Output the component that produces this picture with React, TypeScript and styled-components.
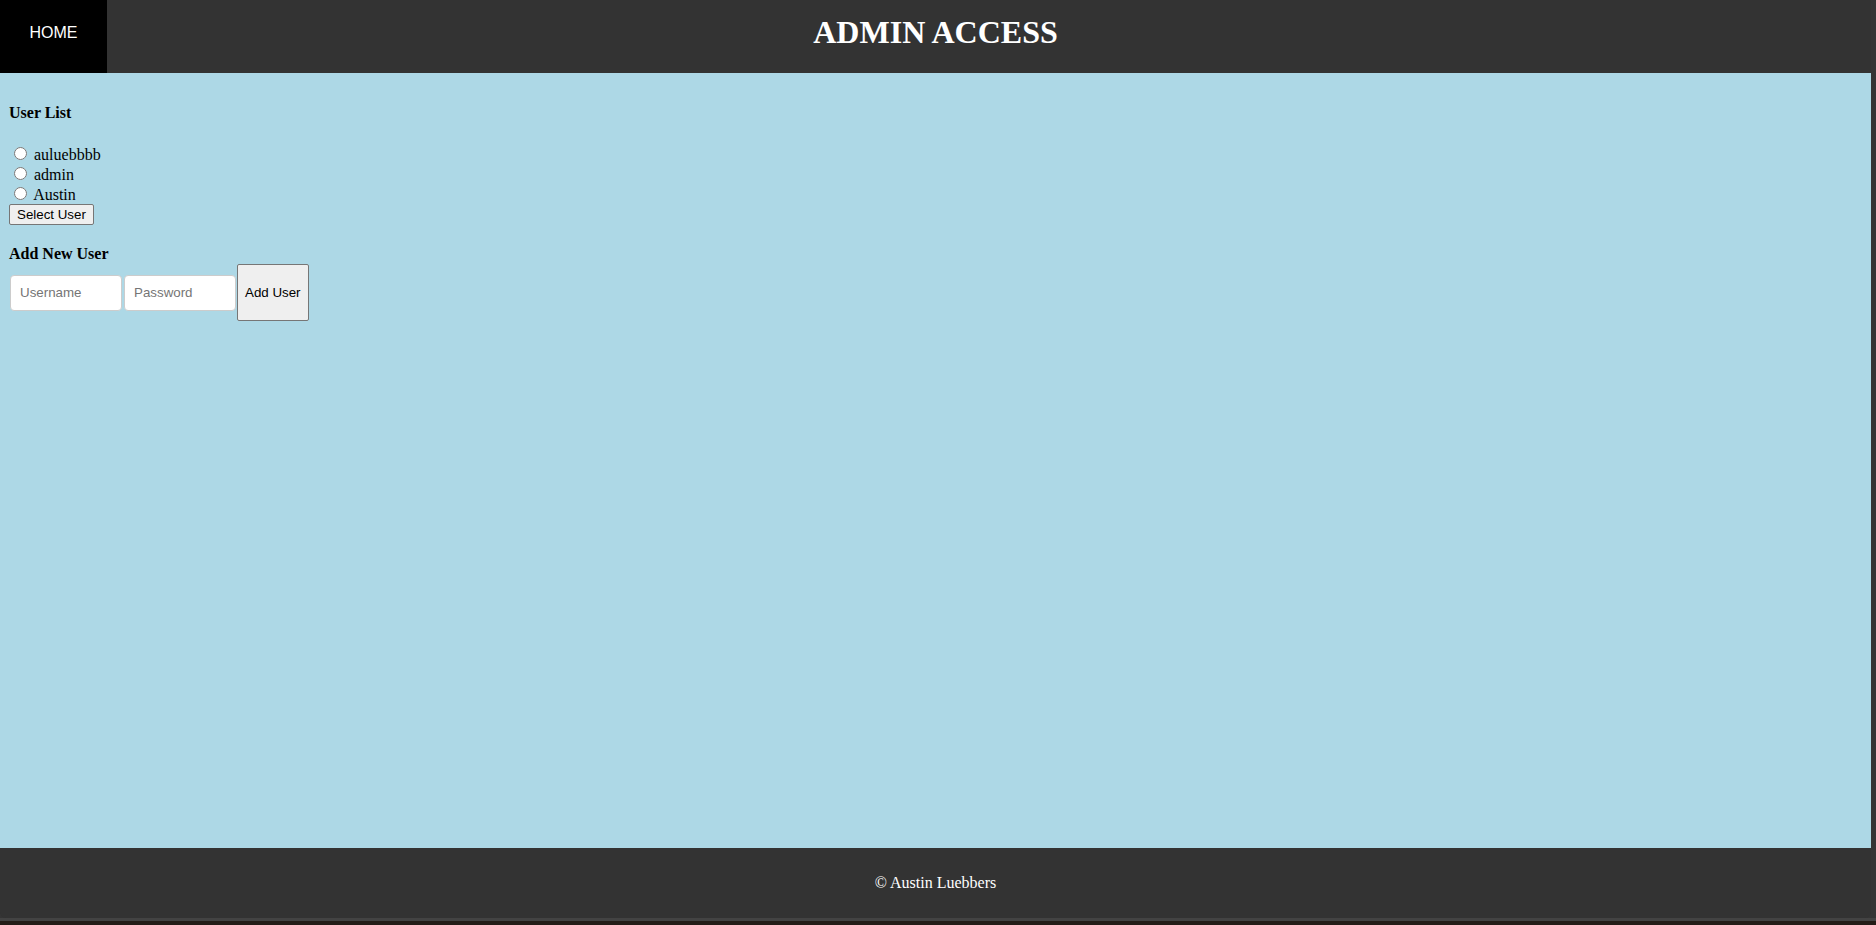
import React from "react";
import styled, { createGlobalStyle } from "styled-components";

const GlobalStyle = createGlobalStyle`
  html, body {
    margin: 0;
    padding: 0;
    overflow: hidden;
  }
  body {
    font-family: "Liberation Serif", "Times New Roman", serif;
    font-size: 16px;
  }
`;

const Root = styled.div`
  width: 1876px;
  height: 925px;
  background: linear-gradient(
    to bottom,
    #353535 0,
    #353535 918px,
    #434343 918px,
    #434343 921px,
    #241c17 921px,
    #241c17 100%
  );
`;

const Page = styled.div`
  width: 1871px;
  height: 918px;
  display: flex;
  flex-direction: column;
`;

const Header = styled.header`
  height: 73px;
  flex: 0 0 73px;
  background: #333333;
  display: grid;
  grid-template-columns: 107px 1fr 107px;
  align-items: start;
`;

const HomeLink = styled.a`
  display: block;
  height: 73px;
  box-sizing: border-box;
  padding-top: 24px;
  background: #000000;
  color: #ffffff;
  font-family: "Liberation Sans", Arial, sans-serif;
  font-size: 16px;
  line-height: normal;
  text-align: center;
  text-decoration: none;
`;

const Title = styled.h1`
  margin: 0;
  padding-top: 14px;
  text-align: center;
  color: #ffffff;
  font-family: "Liberation Serif", "Times New Roman", serif;
  font-weight: bold;
  font-size: 32px;
  line-height: normal;
`;

const Main = styled.main`
  flex: 1 1 auto;
  background: #add8e6;
  padding: 0 9px;
  color: #000000;
`;

const SectionHeading = styled.h4<{ $top: number }>`
  margin: ${(p) => p.$top}px 0 0 0;
  font-family: "Liberation Serif", "Times New Roman", serif;
  font-weight: bold;
  font-size: 16px;
  line-height: normal;
`;

const RadioList = styled.div`
  margin-top: 22px;
`;

const RadioRow = styled.label`
  display: block;
  font-family: "Liberation Serif", "Times New Roman", serif;
  font-size: 16px;
  line-height: normal;
`;

const Radio = styled.input`
  width: 13px;
  height: 13px;
  margin: 3px 3px 0 5px;
  vertical-align: baseline;
`;

const PlainButton = styled.button<{ $height: number }>`
  display: block;
  height: ${(p) => p.$height}px;
  box-sizing: border-box;
  padding: 0 7px;
  margin: 0;
  background: #efefef;
  border: 1px solid #767676;
  border-radius: 2px;
  color: #000000;
  font-family: "Liberation Sans", Arial, sans-serif;
  font-size: 13.33px;
  line-height: normal;
`;

const FormRow = styled.div`
  display: flex;
  align-items: center;
  margin-top: 1px;
`;

const TextInput = styled.input`
  width: 112px;
  height: 36px;
  box-sizing: border-box;
  margin: 0 1px;
  padding: 0 9px;
  background: #ffffff;
  border: 1px solid #cccccc;
  border-radius: 4px;
  font-family: "Liberation Sans", Arial, sans-serif;
  font-size: 13.33px;
  color: #000000;
  outline: none;

  &::placeholder {
    color: #757575;
  }
`;

const Footer = styled.footer`
  height: 70px;
  flex: 0 0 70px;
  background: #333333;
  color: #ffffff;
  display: flex;
  align-items: center;
  justify-content: center;
  border-radius: 0 0 6px 6px;
  font-family: "Liberation Serif", "Times New Roman", serif;
  font-size: 16px;
  line-height: normal;
`;

const users = ["auluebbbb", "admin", "Austin"];

export default function App() {
  return (
    <Root>
      <GlobalStyle />
      <Page>
        <Header>
          <HomeLink href="#">HOME</HomeLink>
          <Title>ADMIN ACCESS</Title>
          <span />
        </Header>
        <Main>
          <SectionHeading $top={31}>User List</SectionHeading>
          <RadioList>
            {users.map((u) => (
              <RadioRow key={u}>
                <Radio type="radio" name="user" value={u} /> {u}
              </RadioRow>
            ))}
          </RadioList>
          <PlainButton $height={21}>Select User</PlainButton>
          <SectionHeading $top={20}>Add New User</SectionHeading>
          <FormRow>
            <TextInput type="text" placeholder="Username" />
            <TextInput type="password" placeholder="Password" />
            <PlainButton $height={57}>Add User</PlainButton>
          </FormRow>
        </Main>
        <Footer>© Austin Luebbers</Footer>
      </Page>
    </Root>
  );
}
